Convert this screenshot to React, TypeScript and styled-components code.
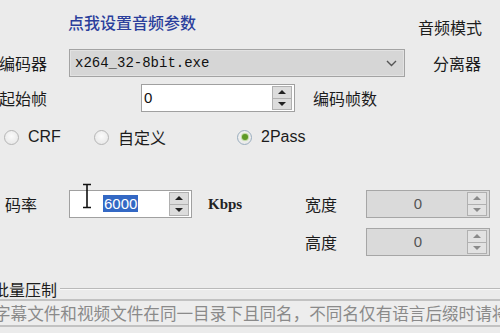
import React from 'react'
import styled, { createGlobalStyle } from 'styled-components'

const Global = createGlobalStyle`
    html, body {
        margin: 0;
        padding: 0;
        background: #ebebeb;
    }
`

const Dialog = styled.div`
    position: relative;
    width: 500px;
    height: 333px;
    overflow: hidden;
    background: #ebebeb;
    font-family: "Noto Sans CJK SC", sans-serif;
    font-size: 16px;
    color: #1c1c1c;
    display: flex;
    flex-direction: column;
`

const Row = styled.div<{ $top: number; $h: number; $start?: boolean }>`
    display: flex;
    align-items: ${p => (p.$start ? 'flex-start' : 'center')};
    margin-top: ${p => p.$top}px;
    height: ${p => p.$h}px;
    flex-shrink: 0;
    white-space: nowrap;
`

const Label = styled.span<{ $left?: number; $w?: number; $top?: number }>`
    margin-left: ${p => p.$left ?? 0}px;
    margin-top: ${p => p.$top ?? 0}px;
    width: ${p => (p.$w ? p.$w + 'px' : 'auto')};
    flex-shrink: 0;
    line-height: 20px;
`

const Link = styled(Label)`
    color: #2b3f9c;
    font-weight: 500;
    cursor: pointer;
`

const Select = styled.div`
    width: 336px;
    height: 28px;
    box-sizing: border-box;
    border: 1px solid #a3a3a3;
    box-shadow: inset 0 0 0 1px #e2e2e2;
    background: #d6d6d6;
    display: flex;
    align-items: center;
    padding-left: 5px;
    font-family: "Liberation Mono", "DejaVu Sans Mono", monospace;
    font-size: 14px;
    color: #111;
    flex-shrink: 0;
    svg {
        margin-left: auto;
        margin-right: 7px;
    }
`

const SpinWrap = styled.div<{ $w: number; $disabled?: boolean }>`
    position: relative;
    width: ${p => p.$w}px;
    height: 28px;
    box-sizing: border-box;
    border: 1px solid ${p => (p.$disabled ? '#a6a6a6' : '#a0a0a0')};
    background: ${p => (p.$disabled ? '#dadada' : '#ffffff')};
    display: flex;
    align-items: center;
    padding: 1px 2px 1px 0;
    flex-shrink: 0;
`

const SpinText = styled.span<{ $pad?: number; $center?: boolean; $disabled?: boolean }>`
    flex: 1;
    padding-left: ${p => p.$pad ?? 2}px;
    text-align: ${p => (p.$center ? 'center' : 'left')};
    font-family: "Liberation Sans", sans-serif;
    font-size: 15px;
    line-height: 20px;
    color: ${p => (p.$disabled ? '#555' : '#111')};
`

const Selected = styled.span`
    background: #3368c4;
    color: #fff;
    padding: 0 1px;
`

const SpinButtons = styled.div<{ $disabled?: boolean }>`
    width: 20px;
    height: 24px;
    box-sizing: border-box;
    display: flex;
    flex-direction: column;
    border: 1px solid #b0b0b0;
    background: ${p => (p.$disabled ? '#e2e2e2' : '#dcdcdc')};
`

const SpinBtn = styled.div<{ $down?: boolean; $disabled?: boolean }>`
    flex: 1;
    display: flex;
    align-items: center;
    justify-content: center;
    & + & {
        border-top: 1px solid #b0b0b0;
    }
    &::after {
        content: '';
        border-left: 4px solid transparent;
        border-right: 4px solid transparent;
        ${p => (p.$down ? 'border-top' : 'border-bottom')}: 4px solid ${p => (p.$disabled ? '#8a8a8a' : '#222')};
    }
`

const Cursor = styled.svg`
    position: absolute;
    left: 12px;
    top: -8px;
`

const RadioItem = styled.label<{ $left?: number; $w?: number }>`
    display: flex;
    align-items: center;
    gap: 9px;
    margin-left: ${p => p.$left ?? 0}px;
    width: ${p => (p.$w ? p.$w + 'px' : 'auto')};
    flex-shrink: 0;
    font-family: "Liberation Sans", "Noto Sans CJK SC", sans-serif;
    font-size: 16px;
    color: #1c1c1c;
`

const RadioCircle = styled.span<{ $checked?: boolean }>`
    width: 15px;
    height: 15px;
    box-sizing: border-box;
    border-radius: 50%;
    border: 1px solid ${p => (p.$checked ? '#9aaebf' : '#b5b5b5')};
    background: radial-gradient(circle at 50% 40%, #fbfbfb, #e3e3e3);
    display: flex;
    align-items: center;
    justify-content: center;
    &::after {
        content: '';
        display: ${p => (p.$checked ? 'block' : 'none')};
        width: 6px;
        height: 6px;
        border-radius: 50%;
        background: #5e9a26;
        box-shadow: 0 0 1px 1px #b9d69b;
    }
`

const Kbps = styled.span`
    margin-left: 16px;
    width: 34px;
    font-family: "Liberation Serif", serif;
    font-weight: bold;
    font-size: 15px;
    color: #222;
    flex-shrink: 0;
`

const GroupLine = styled.div`
    flex: 1;
    margin-left: 3px;
    margin-right: -10px;
    border-top: 1px solid #b9b9b9;
    border-bottom: 1px solid #f8f8f8;
`

const PathField = styled.div`
    margin-left: -10px;
    width: 520px;
    height: 28px;
    box-sizing: border-box;
    border-top: 2px solid #c2c2c2;
    border-bottom: 2px solid #c2c2c2;
    background: #ededed;
    display: flex;
    align-items: center;
    padding-left: 4px;
    color: #8a8a8a;
    font-size: 16.6px;
    white-space: nowrap;
    overflow: hidden;
    flex-shrink: 0;
`

function Spin({ w, value, disabled, pad, center, selected, cursor }: {
    w: number
    value: string
    disabled?: boolean
    pad?: number
    center?: boolean
    selected?: boolean
    cursor?: boolean
}) {
    return (
        <SpinWrap $w={w} $disabled={disabled}>
            <SpinText $pad={pad} $center={center} $disabled={disabled}>
                {selected ? <Selected>{value}</Selected> : value}
            </SpinText>
            <SpinButtons $disabled={disabled}>
                <SpinBtn $disabled={disabled} />
                <SpinBtn $down $disabled={disabled} />
            </SpinButtons>
            {cursor && (
                <Cursor width="10" height="26" viewBox="0 0 10 26">
                    <path d="M1 1.5h8M1 24.5h8M5 1.5v23" stroke="#111" strokeWidth="1.6" fill="none" />
                </Cursor>
            )}
        </SpinWrap>
    )
}

export default function App() {
    return (
        <Dialog>
            <Global />
            <Row $top={0} $h={49} $start>
                <Link $left={68} $top={12}>点我设置音频参数</Link>
                <Label $left={222} $top={17}>音频模式</Label>
            </Row>
            <Row $top={0} $h={28}>
                <Label $left={-1} $w={70}>编码器</Label>
                <Select>
                    x264_32-8bit.exe
                    <svg width="11" height="7" viewBox="0 0 11 7">
                        <path d="M1 1l4.5 4.5L10 1" stroke="#555" strokeWidth="1.4" fill="none" />
                    </svg>
                </Select>
                <Label $left={28}>分离器</Label>
            </Row>
            <Row $top={7} $h={28}>
                <Label $left={-1} $w={142}>起始帧</Label>
                <Spin w={154} value="0" />
                <Label $left={18}>编码帧数</Label>
            </Row>
            <Row $top={16} $h={18}>
                <RadioItem $left={4} $w={90}>
                    <RadioCircle />
                    CRF
                </RadioItem>
                <RadioItem $w={143}>
                    <RadioCircle />
                    自定义
                </RadioItem>
                <RadioItem>
                    <RadioCircle $checked />
                    2Pass
                </RadioItem>
            </Row>
            <Row $top={44} $h={28}>
                <Label $left={5} $w={64}>码率</Label>
                <Spin w={123} value="6000" pad={33} selected cursor />
                <Kbps>Kbps</Kbps>
                <Label $left={63} $w={61}>宽度</Label>
                <Spin w={124} value="0" center disabled />
            </Row>
            <Row $top={10} $h={28}>
                <Label $left={305} $w={61}>高度</Label>
                <Spin w={124} value="0" center disabled />
            </Row>
            <Row $top={23} $h={20}>
                <Label $left={-7}>批量压制</Label>
                <GroupLine />
            </Row>
            <PathField>字幕文件和视频文件在同一目录下且同名，不同名仅有语言后缀时请将</PathField>
        </Dialog>
    )
}
